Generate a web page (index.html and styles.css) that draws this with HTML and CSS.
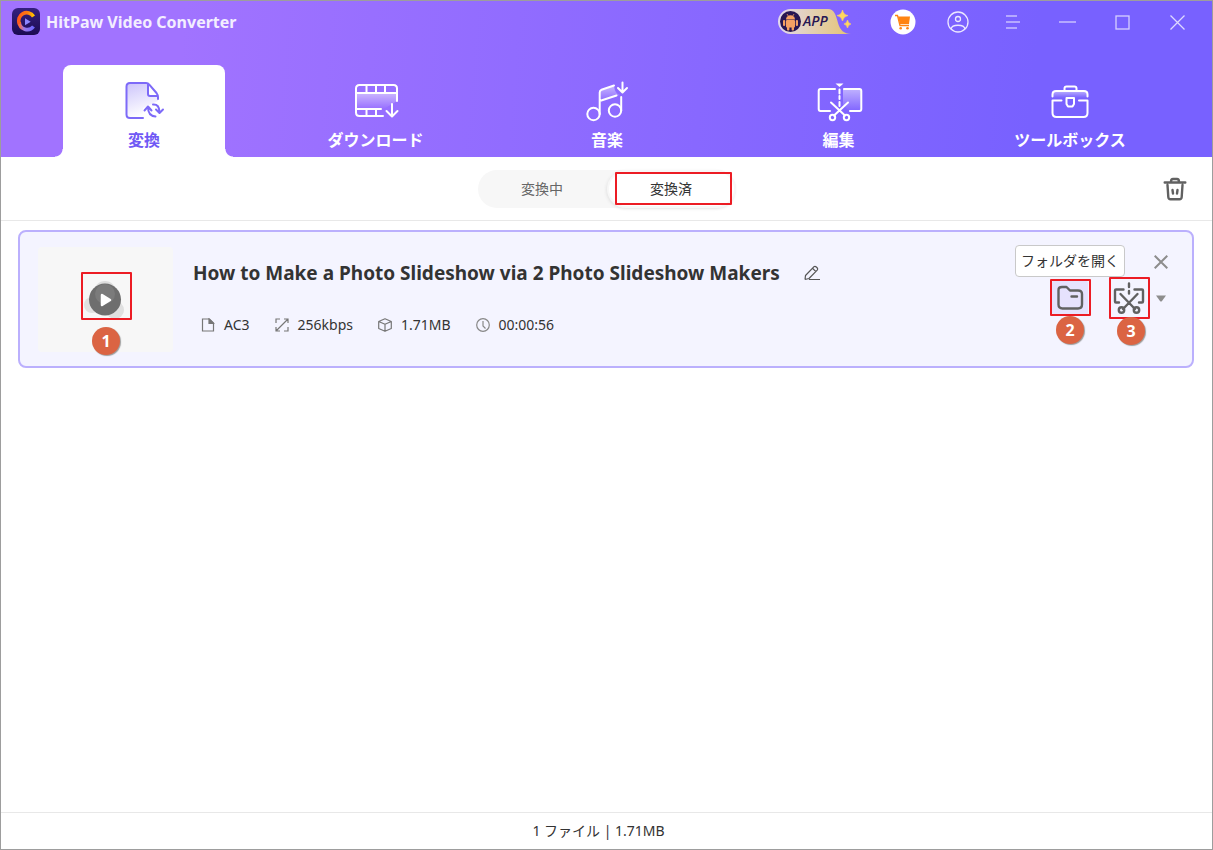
FILE: index.html
```html
<!DOCTYPE html>
<html lang="ja">
<head>
<meta charset="utf-8">
<meta name="viewport" content="width=device-width, initial-scale=1">
<title>HitPaw Video Converter</title>
<link rel="stylesheet" href="styles.css">
</head>
<body>
<div class="window">
  <header class="header">
    <div class="titlebar">
      <div class="brand">
        <svg class="brand-logo" width="28" height="28" viewBox="0 0 28 28" aria-hidden="true">
          <defs>
            <linearGradient id="logoBg" x1="0" y1="0" x2="0" y2="1"><stop offset="0" stop-color="#35207f"/><stop offset="1" stop-color="#1c0b52"/></linearGradient>
            <linearGradient id="logoHot" x1="0" y1="0" x2="1" y2="0"><stop offset="0" stop-color="#ff5a1c"/><stop offset=".6" stop-color="#ff7a10"/><stop offset="1" stop-color="#ffc400"/></linearGradient>
            <linearGradient id="logoCool" x1="0" y1="0" x2="1" y2="0"><stop offset="0" stop-color="#ff6a3a"/><stop offset=".35" stop-color="#9a78e8"/><stop offset="1" stop-color="#6f66ff"/></linearGradient>
          </defs>
          <rect width="28" height="27" rx="6" fill="url(#logoBg)"/>
          <path d="M21.500 18.500 A8 8 0 0 1 7.200 14" fill="none" stroke="url(#logoCool)" stroke-width="3.600"/>
          <path d="M7.400 16 A8 8 0 0 1 21.500 8.500" fill="none" stroke="url(#logoHot)" stroke-width="3.600"/>
          <path d="M13 10.200 L18.700 13.700 L13 17.200Z" fill="#8d86ff"/>
        </svg>
        <span class="brand-name">HitPaw Video Converter</span>
      </div>
      <div class="window-tools">
        <button class="app-button" type="button" aria-label="APP">
          <svg width="74" height="26" viewBox="0 0 74 26" aria-hidden="true">
            <defs><linearGradient id="appBg"><stop offset="0" stop-color="#e2d8ee"/><stop offset=".5" stop-color="#e3cfae"/><stop offset="1" stop-color="#e5c373"/></linearGradient></defs>
            <path d="M12.500 0 H50 C56 0 58 6 60 14 C62 21 66 25 73 25 H12.500 A12.500 12.500 0 0 1 12.500 0Z" fill="url(#appBg)"/>
            <circle cx="12.500" cy="12.500" r="10.500" fill="#271653"/>
            <g fill="#f5a063">
              <path d="M8 10.500 a4.500 4.200 0 0 1 9 0Z"/>
              <rect x="8" y="11" width="9" height="7.500" rx="1"/>
              <rect x="5" y="11" width="2.200" height="6" rx="1"/><rect x="17.800" y="11" width="2.200" height="6" rx="1"/>
              <rect x="9" y="17" width="2.400" height="4.500" rx="1"/><rect x="13.600" y="17" width="2.400" height="4.500" rx="1"/>
            </g>
            <path d="M9 5 l1.500 2.500 M16 5 l-1.500 2.500" stroke="#f5a063" stroke-width=".8"/>
            <path d="M64.500 1 q1 5 5.500 5.500 q-4.500 .8 -5.500 5.500 q-1 -4.700 -5.500 -5.500 q4.500 -.5 5.500 -5.500Z M69.500 11 q.8 3.500 3.500 4 q-2.700 .6 -3.500 4 q-.8 -3.400 -3.500 -4 q2.700 -.5 3.500 -4Z" fill="#ffd75c" stroke="#ffd75c" stroke-width=".6"/>
          </svg>
          <span class="app-text">APP</span>
        </button>
        <button class="tool" type="button" aria-label="Store">
          <svg width="26" height="26" viewBox="0 0 26 26" aria-hidden="true">
            <circle cx="13" cy="13" r="12.500" fill="#fff"/>
            <path d="M8 7.500 H20 L19 15 H10Z" fill="#ff8412"/>
            <path d="M5 6.500 H7.500 L10 16.500 H19" fill="none" stroke="#ff8412" stroke-width="1.300"/>
            <circle cx="10.700" cy="19.200" r="1.300" fill="#ff8412"/><circle cx="17.500" cy="19.200" r="1.300" fill="#ff8412"/>
          </svg>
        </button>
        <button class="tool" type="button" aria-label="Account">
          <svg width="22" height="22" viewBox="0 0 22 22" fill="none" stroke="#ece8ff" stroke-width="1.300" aria-hidden="true"><circle cx="11" cy="11" r="10"/><circle cx="11" cy="8" r="2.500"/><path d="M4 18 C5 13 17 13 18 18"/></svg>
        </button>
        <button class="tool" type="button" aria-label="Menu">
          <svg width="14" height="14" viewBox="0 0 14 14" stroke="#c9c0ff" stroke-width="1.500" aria-hidden="true"><path d="M0 1 H11 M0 7 H14 M0 13 H11"/></svg>
        </button>
        <button class="tool" type="button" aria-label="Minimize">
          <svg width="17" height="15" viewBox="0 0 17 15" stroke="#c9c0ff" stroke-width="1.500" aria-hidden="true"><path d="M0 7 H17"/></svg>
        </button>
        <button class="tool" type="button" aria-label="Maximize">
          <svg width="15" height="15" viewBox="0 0 15 15" fill="none" stroke="#d6cfff" stroke-width="1.300" aria-hidden="true"><rect x="1" y="1" width="13" height="13"/></svg>
        </button>
        <button class="tool" type="button" aria-label="Close">
          <svg width="15" height="15" viewBox="0 0 15 15" stroke="#ded9ff" stroke-width="1.300" aria-hidden="true"><path d="M.5 .5 L14.500 14.500 M14.500 .5 L.5 14.500"/></svg>
        </button>
      </div>
    </div>
    <nav class="tabs">
      <button class="tab tab-active" type="button">
        <svg class="tab-icon" viewBox="0 0 48 44" aria-hidden="true">
          <defs><linearGradient id="docFill" x1="0" y1="0" x2=".3" y2="1"><stop offset="0" stop-color="#ccc4fb"/><stop offset="1" stop-color="#fff"/></linearGradient></defs>
          <path d="M23 39 H10 Q6.500 39 6.500 35.500 V7.500 Q6.500 4 10 4 H28 V16 H38 V22 L23 29Z" fill="url(#docFill)" stroke="none"/>
          <path d="M23 39 H10 Q6.500 39 6.500 35.500 V7.500 Q6.500 4 10 4 H26 Q28 4 29.500 5.800 L36.500 14 Q38 16 38 18 V20 M28 4.500 V15 Q28 17 30 17 H37.500"/>
          <path d="M24.500 31.500 L28 27.500 L31.500 31.500 M28 28 Q28 37 35.500 37.500 M33 25.500 Q39.500 25 39.500 33.500 M36 30.500 L39.500 34 L43 30.500"/>
        </svg>
        <span>変換</span>
      </button>
      <button class="tab" type="button">
        <svg class="tab-icon" viewBox="0 0 48 44" aria-hidden="true">
          <defs><linearGradient id="lightFill" x1="0" y1="0" x2="0" y2="1"><stop offset="0" stop-color="#fff" stop-opacity=".5"/><stop offset="1" stop-color="#fff" stop-opacity="0"/></linearGradient></defs>
          <path d="M4 14 H45 V22 L32 30 H4Z" fill="url(#lightFill)" stroke="none"/>
          <path d="M31 37 H7.500 Q4 37 4 33.500 V9.500 Q4 6 7.500 6 H41.500 Q45 6 45 9.500 V22 M4 14 H45 M4 30 H29"/>
          <path d="M14.500 6 V14 M24 6 V14 M33 6 V14 M14.500 30 V37 M24 30 V37 M40 25 V37 M34.500 32 L40 37.500 L45.500 32"/>
        </svg>
        <span>ダウンロード</span>
      </button>
      <button class="tab" type="button">
        <svg class="tab-icon" viewBox="0 0 48 44" aria-hidden="true">
          <path d="M16.500 22 V12 L31 7 Q32 15 37 16Z" fill="url(#lightFill)" stroke="none"/>
          <circle cx="10.500" cy="35" r="6.200"/><circle cx="32" cy="31.500" r="6.200"/>
          <path d="M16.700 35 V13.500 Q16.700 11.500 18.500 10.800 L31 6.500 M16.700 22 L33.500 16.500 M38.200 18 V31.500 M39.500 3.500 V13 M35 9 L39.500 13.500 L44 9"/>
        </svg>
        <span>音楽</span>
      </button>
      <button class="tab" type="button">
        <svg class="tab-icon" viewBox="0 0 48 44" aria-hidden="true">
          <path d="M28 10 H46 V32 H34 L28 26Z" fill="url(#lightFill)" stroke="none"/>
          <path d="M20 10 H5.500 Q3.700 10 3.700 12 V30 Q3.700 32 5.500 32 H15 M29 10 H44.500 Q46.300 10 46.300 12 V30 Q46.300 32 44.500 32 H35"/>
          <path d="M20.500 4.500 H28.500 L24.500 8Z" fill="#fff" stroke="none"/>
          <path d="M24.500 10.500 V14.500 M24.500 17 V20 M24.500 23 V27 M16 23.500 L30 36.500 M33 23.500 L19 36.500"/>
          <circle cx="17.500" cy="38.500" r="2.700"/><circle cx="31.500" cy="38.500" r="2.700"/>
        </svg>
        <span>編集</span>
      </button>
      <button class="tab" type="button">
        <svg class="tab-icon" viewBox="0 0 48 44" aria-hidden="true">
          <path d="M6.500 19 V12 H41.500 V19Z" fill="url(#lightFill)" stroke="none"/>
          <path d="M6.500 17.500 V15.500 Q6.500 12 10 12 H38 Q41.500 12 41.500 15.500 V17.500 M18.500 11.500 V9.500 Q18.500 7.500 20.500 7.500 H28.500 Q30.500 7.500 30.500 9.500 V11.500"/>
          <path d="M15.500 21.500 H6.500 V34 Q6.500 38 10.500 38 H37.500 Q41.500 38 41.500 34 V21.500 H33"/>
          <path d="M20.500 19 H28 V25 L26.500 27.500 H22 L20.500 25Z"/>
        </svg>
        <span>ツールボックス</span>
      </button>
    </nav>
  </header>

  <main class="content">
    <div class="toolbar">
      <div class="segments">
        <button class="segment" type="button">変換中</button>
        <button class="segment segment-active" type="button">変換済<span class="marker marker-segment"></span></button>
      </div>
      <button class="icon-button trash" type="button" aria-label="Delete">
        <svg width="24" height="24" viewBox="0 0 24 24" fill="none" stroke="#616161" stroke-width="2.400" stroke-linecap="round" stroke-linejoin="round" aria-hidden="true"><path d="M1.700 5.500 H22.300 M8 5 Q8 2 10 2 H14 Q16 2 16 5 M4.500 8 L5.300 20 Q5.500 22.300 7.500 22.300 H16.500 Q18.500 22.300 18.700 20 L19.500 8 M9.500 13 L10 16.500 M14.500 13 L14 16.500"/></svg>
      </button>
    </div>

    <section class="list">
      <article class="card">
        <div class="thumb">
          <button class="play" type="button" aria-label="Play">
            <svg width="44" height="44" viewBox="1 1 44 44" aria-hidden="true">
              <circle cx="22" cy="15" r="11" fill="#dedede"/><circle cx="9" cy="28" r="8" fill="#e0e0e0"/><circle cx="32" cy="33" r="9" fill="#e0e0e0"/>
              <circle cx="22" cy="22.500" r="16" fill="#6e6e6e"/><circle cx="22" cy="17" r="10" fill="#7b7b7b"/>
              <path d="M19 18 L27 23 L19 28Z" fill="#fff" stroke="#fff" stroke-width="2.500" stroke-linejoin="round"/>
            </svg>
          </button>
          <span class="marker marker-play"></span>
          <span class="badge badge-play">1</span>
        </div>
        <div class="info">
          <div class="title-row">
            <h1 class="title">How to Make a Photo Slideshow via 2 Photo Slideshow Makers</h1>
            <button class="icon-button" type="button" aria-label="Rename">
              <svg width="16" height="16" viewBox="0 0 16 16" fill="none" stroke="#555" stroke-width="1.200" stroke-linejoin="round" aria-hidden="true"><path d="M1 14.500 L1.500 10.500 L9.800 1.800 Q11 .8 12.300 2 L13.300 3 Q14.200 4 13.200 5.200 L5 13.500 L1 14.500 M8.500 3.300 L11.900 6.600 M5 14.500 H16"/></svg>
            </button>
          </div>
          <ul class="meta">
            <li class="meta-item"><svg width="14" height="14" viewBox="0 0 14 14" fill="none" stroke="#777" stroke-width="1.200" aria-hidden="true"><path d="M1.500 1 H8.500 L12.500 5 V13 H1.500Z"/><path d="M8 1 L12.500 5.500 H8Z" fill="#777"/></svg>AC3</li>
            <li class="meta-item"><svg width="14" height="14" viewBox="0 0 14 14" fill="none" stroke="#777" stroke-width="1.200" aria-hidden="true"><path d="M1 5 V1 H5 M9 13 H13 V9 M1 13 L13 1 M9 1 H13 V5 M1 9 V13 H5"/></svg>256kbps</li>
            <li class="meta-item"><svg width="14" height="14" viewBox="0 0 14 14" fill="none" stroke="#777" stroke-width="1.200" stroke-linejoin="round" aria-hidden="true"><path d="M7 .8 L13.300 3.500 V10.500 L7 13.300 L.7 10.500 V3.500Z M.7 3.500 L7 6.300 L13.300 3.500 M7 6.300 V13.300"/></svg>1.71MB</li>
            <li class="meta-item"><svg width="14" height="14" viewBox="0 0 14 14" fill="none" stroke="#888" stroke-width="1.200" aria-hidden="true"><circle cx="7" cy="7" r="6.300"/><path d="M7 3 V8 L9.500 10.500"/></svg>00:00:56</li>
          </ul>
        </div>
        <div class="actions">
          <button class="icon-button remove" type="button" aria-label="Remove">
            <svg width="14" height="14" viewBox="0 0 14 14" stroke="#8d8d8d" stroke-width="2" aria-hidden="true"><path d="M.7 .7 L13.300 13.300 M13.300 .7 L.7 13.300"/></svg>
          </button>
          <div class="action-row">
            <div class="action">
              <button class="icon-button action-button action-hover" type="button" aria-label="フォルダを開く">
                <svg width="28" height="26" viewBox="0 0 28 26" fill="none" stroke="#616161" stroke-width="2.400" stroke-linecap="round" stroke-linejoin="round" aria-hidden="true"><path d="M2.500 5 Q2.500 2 6 2 H10.500 L14 5.500 H22 Q26 5.500 26 9 V19.500 Q26 23.500 22 23.500 H6.500 Q2.500 23.500 2.500 19.500Z M15.500 11.500 H21"/></svg>
              </button>
              <span class="tooltip">フォルダを開く</span>
              <span class="marker marker-folder"></span>
              <span class="badge badge-folder">2</span>
            </div>
            <div class="action">
              <button class="icon-button action-button" type="button" aria-label="編集">
                <svg width="32" height="32" viewBox="0 0 32 32" fill="none" stroke="#616161" stroke-width="2.400" stroke-linecap="round" stroke-linejoin="round" aria-hidden="true"><path d="M10.500 7.500 H3 Q2 7.500 2 8.500 V19.500 Q2 20.500 3 20.500 H6 M21.500 7.500 H29 Q30 7.500 30 8.500 V19.500 Q30 20.500 29 20.500 H26 M16 1.500 V5 M16 9 V11.500 M7.500 12 L22 27 M24.500 12 L10 27"/><circle cx="8.500" cy="28" r="2.700"/><circle cx="23.500" cy="28" r="2.700"/></svg>
              </button>
              <span class="marker marker-edit"></span>
              <span class="badge badge-edit">3</span>
            </div>
            <button class="icon-button caret" type="button" aria-label="More">
              <svg width="10" height="7" viewBox="0 0 10 7" aria-hidden="true"><path d="M0 .5 H10 L6 6 Q5 7 4 6Z" fill="#8d8d8d"/></svg>
            </button>
          </div>
        </div>
      </article>
    </section>
  </main>

  <footer class="statusbar">1 ファイル | 1.71MB</footer>
</div>
</body>
</html>
```

FILE: styles.css
```css
* {
  box-sizing: border-box;
}

body {
  margin: 0;
  font-family: "Noto Sans", "Noto Sans CJK JP", sans-serif;
  font-size: 14px;
  line-height: 20px;
  color: #333;
}

button {
  margin: 0;
  padding: 0;
  border: 0;
  background: none;
  font: inherit;
  color: inherit;
  cursor: pointer;
}

svg {
  display: block;
}

.window {
  display: flex;
  flex-direction: column;
  min-height: 100vh;
  border: 1px solid #9d9d9d;
  background: #fff;
}

/* Header */
.header {
  background: linear-gradient(95deg, #a173ff 15%, #7861ff 85%);
}

.titlebar {
  display: flex;
  justify-content: space-between;
  align-items: center;
  height: 42px;
  padding: 0 7px 0 11px;
}

.brand {
  display: flex;
  align-items: center;
  gap: 6px;
}

.brand-name {
  font-size: 16px;
  font-weight: 700;
  color: #f3eeff;
}

.window-tools {
  display: flex;
  align-items: center;
}

.app-button {
  position: relative;
  margin-right: 23px;
}

.app-text {
  position: absolute;
  top: 2px;
  left: 25px;
  font-family: "Open Sans", "Noto Sans", sans-serif;
  font-size: 14px;
  font-weight: 600;
  font-style: italic;
  color: #271653;
}

.tool {
  display: flex;
  align-items: center;
  justify-content: center;
  width: 55px;
  height: 40px;
}

.tabs {
  display: flex;
  justify-content: space-between;
  padding: 22px 61px 0 62px;
}

.tab {
  position: relative;
  display: flex;
  flex-direction: column;
  align-items: center;
  gap: 7px;
  width: 162px;
  padding: 14px 0 6px;
  border-radius: 8px 8px 0 0;
  font-size: 16px;
  line-height: 21px;
  font-weight: 700;
  color: #fff;
  white-space: nowrap;
}

.tab-icon {
  width: 48px;
  height: 44px;
  fill: none;
  stroke: currentColor;
  stroke-width: 2;
  stroke-linecap: round;
  stroke-linejoin: round;
}

.tab-active {
  background: #fff;
  color: #7059f5;
}

.tab-active .tab-icon {
  stroke: #7d6af8;
}

.tab-active::before,
.tab-active::after {
  content: "";
  position: absolute;
  bottom: 0;
  width: 8px;
  height: 8px;
}

.tab-active::before {
  right: 100%;
  background: radial-gradient(circle at 0 0, transparent 7px, #fff 8px);
}

.tab-active::after {
  left: 100%;
  background: radial-gradient(circle at 100% 0, transparent 7px, #fff 8px);
}

/* Content */
.content {
  flex: 1;
}

.toolbar {
  display: grid;
  grid-template-columns: 1fr auto 1fr;
  align-items: center;
  height: 64px;
  padding: 0 25px;
  border-bottom: 1px solid #e8e8e8;
}

.segments {
  grid-column: 2;
  display: flex;
  border-radius: 19px;
  background: #f7f7f7;
}

.segment {
  position: relative;
  width: 129px;
  height: 38px;
  color: #666;
}

.segment-active {
  border: 2px solid #f7f7f7;
  border-radius: 19px;
  background: #fff;
  box-shadow: -1px 1px 3px #e4e4e4;
  color: #333;
}

.trash {
  justify-self: end;
}

.list {
  padding: 9px 18px 9px 17px;
}

.card {
  display: flex;
  gap: 20px;
  padding: 15px 18px 14px;
  border: 2px solid #bbb0fd;
  border-radius: 8px;
  background: #f4f4ff;
}

.thumb {
  position: relative;
  display: flex;
  align-items: center;
  justify-content: center;
  width: 135px;
  height: 105px;
  border-radius: 4px;
  background: #f7f7f7;
}

.info {
  flex: 1;
  padding-top: 13px;
}

.title-row {
  display: flex;
  align-items: center;
  gap: 24px;
}

.title {
  margin: 0;
  font-size: 19px;
  line-height: 26px;
  font-weight: 700;
}

.meta {
  display: flex;
  gap: 25px;
  margin: 29px 0 0;
  padding: 0 0 0 8px;
  list-style: none;
}

.meta-item {
  display: flex;
  align-items: center;
  gap: 9px;
}

.actions {
  display: flex;
  flex-direction: column;
  align-items: flex-end;
  gap: 11px;
  padding: 8px 6px 0 0;
}

.action-row {
  display: flex;
  align-items: center;
  padding-right: 2px;
}

.action {
  position: relative;
  margin-right: 23px;
}

.action + .action {
  margin-right: 9px;
}

.action-button {
  display: flex;
  align-items: center;
  justify-content: center;
  width: 36px;
  height: 36px;
  border-radius: 4px;
}

.action-hover {
  background: #e6e2fd;
}

.tooltip {
  position: absolute;
  right: -37px;
  bottom: 39px;
  padding: 5px;
  border: 1px solid #c9c9c9;
  border-radius: 4px;
  background: #fff;
  white-space: nowrap;
}

/* Numbered callouts */
.marker {
  position: absolute;
  border: 2px solid #ec1c24;
  border-radius: 1px;
  pointer-events: none;
}

.marker-segment {
  inset: 0 2px 1px 6px;
}

.marker-play {
  top: 25px;
  left: 43px;
  width: 51px;
  height: 48px;
}

.marker-folder {
  inset: -1px -3px 0 -2px;
}

.marker-edit {
  inset: -3px -3px -3px -2px;
}

.badge {
  position: absolute;
  width: 28px;
  height: 28px;
  border-radius: 50%;
  background: #db6443;
  box-shadow: 1px 1px 1px #9c9c9c;
  color: #fff;
  font-size: 16px;
  line-height: 28px;
  font-weight: 700;
  text-align: center;
}

.badge-play {
  top: 80px;
  left: 54px;
}

.badge-folder {
  top: 36px;
  left: 4px;
}

.badge-edit {
  top: 37px;
  left: 6px;
}

/* Status bar */
.statusbar {
  padding: 8px 16px 8px 0;
  border-top: 1px solid #e8e8e8;
  text-align: center;
}
```
